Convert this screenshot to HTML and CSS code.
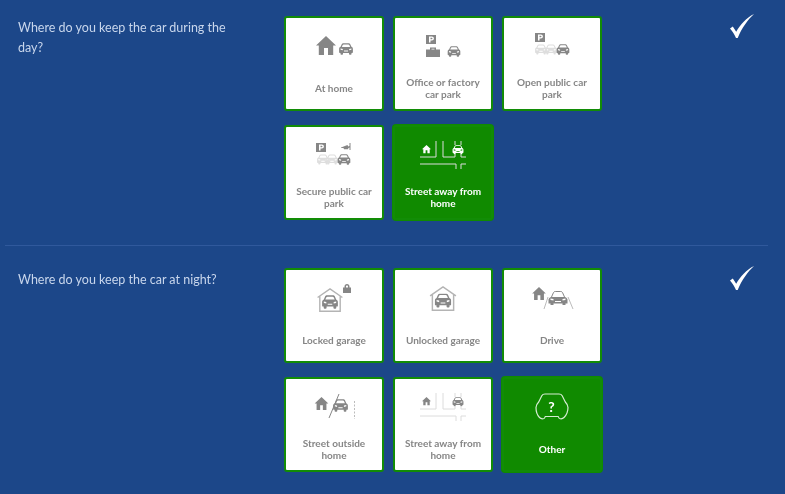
FILE: index.html
```html
<!DOCTYPE html>
<html lang="en">
<head>
<meta charset="utf-8">
<title>Where do you keep the car</title>
<link rel="stylesheet" href="styles.css">
</head>
<body>
<svg class="sprites" aria-hidden="true">
  <defs>
    <symbol id="car" viewBox="0 0 14 12">
      <path fill="currentColor" fill-rule="evenodd" d="M2.600 1.500C3 .6 3.700.2 4.700.2h4.600c1 0 1.700.4 2.100 1.300l1 2.300c.9.4 1.500 1.100 1.500 2.200v3.200c0 .5-.3.8-.8.8h-.6v1c0 .5-.3.8-.8.8h-.9c-.5 0-.8-.3-.8-.8v-1H4v1c0 .5-.3.8-.8.8h-.9c-.5 0-.8-.3-.8-.8v-1H.9C.4 10 .1 9.700.1 9.200V6c0-1.100.6-1.800 1.500-2.200zM3.700 2l-.8 1.900h8.200L10.300 2c-.2-.4-.5-.6-1-.6H4.700c-.5 0-.8.2-1 .6zM1.600 5.500v1.300l2.200.5V6zM12.400 5.500v1.300l-2.200.5V6zM5 7.600v.9h4v-.9z"/>
    </symbol>
    <symbol id="house" viewBox="0 0 20 19">
      <path fill="currentColor" fill-rule="evenodd" d="M10 0l10 9.500h-2.800V19H2.800V9.500H0zM8 12v7h4v-7z"/>
    </symbol>
    <symbol id="parking" viewBox="0 0 10 9">
      <path fill="currentColor" fill-rule="evenodd" d="M0 0h10v9H0zM3 1.500v6h1.500V5.500h1.300c1.300 0 2.100-.8 2.100-2s-.8-2-2.100-2zM4.500 2.700h1.100c.6 0 .9.300.9.800s-.3.800-.9.800H4.500z"/>
    </symbol>
    <symbol id="garage" viewBox="0 0 26 24">
      <path class="garage-wall" fill="none" stroke-width="1.400" d="M.6 9.500L13 .9l12.400 8.600M2.800 8.300v15h20.400V8.300"/>
      <use href="#car" x="5" y="7" width="16" height="14"/>
    </symbol>
    <symbol id="street" viewBox="0 0 96 58">
      <path class="lines" fill="none" stroke-width="1" d="M41 14v16H25M48 14v16h12v-3M60 14v4M66 14v4M66 27v3h5M25 37h36v5M71 37h-5v5"/>
      <use href="#house" x="27" y="18" width="9" height="8.500"/>
      <use href="#car" x="57" y="18" width="12" height="9.500"/>
    </symbol>
  </defs>
</svg>

<main class="page">
  <section class="question">
    <p class="question-text">Where do you keep the car during the day?</p>
    <div class="options">
      <button class="card">
        <svg class="icon" viewBox="0 0 96 58"><use href="#house" x="30" y="18" width="20" height="19"/><use href="#car" x="53" y="25" width="14" height="12"/></svg>
        <span class="label">At home</span>
      </button>
      <button class="card">
        <svg class="icon" viewBox="0 0 96 58"><use href="#parking" x="31" y="17" width="10" height="9"/><path fill="currentColor" fill-rule="evenodd" d="M31 31.500h4v-2h6v2h4V39H31zM36.500 30.800v.7h3v-.7z"/><use href="#car" x="52" y="28" width="14" height="11"/></svg>
        <span class="label">Office or factory car park</span>
      </button>
      <button class="card">
        <svg class="icon" viewBox="0 0 96 58"><use href="#parking" x="31" y="15" width="10" height="9"/><g class="pale"><use href="#car" x="31" y="26" width="12" height="11"/><use href="#car" x="41" y="26" width="12" height="11"/></g><use href="#car" x="52" y="26" width="14" height="11"/></svg>
        <span class="label">Open public car park</span>
      </button>
      <button class="card">
        <svg class="icon" viewBox="0 0 96 58"><use href="#parking" x="30" y="16" width="10" height="9"/><path fill="currentColor" d="M55 20.500l6.500-2.500.7 1.500 1.300-.5V16h1v7h-1v-2.500l-1 .5-.6 1.300H58l-.5-1.300H55z"/><g class="pale"><use href="#car" x="31" y="27" width="12" height="11"/><use href="#car" x="40" y="27" width="12" height="11"/></g><use href="#car" x="51" y="27" width="14" height="11"/></svg>
        <span class="label">Secure public car park</span>
      </button>
      <button class="card selected">
        <svg class="icon" viewBox="0 0 96 58"><use href="#street" width="96" height="58"/></svg>
        <span class="label">Street away from home</span>
      </button>
    </div>
    <svg class="tick" viewBox="0 0 24 24"><path fill="#fff" d="M0 14.500l2.800-2 3.400 5.300C10.500 10.500 16 4 24 0c-6 5.500-12 13.500-16.300 24H6C4.500 20.500 2.500 17.500 0 14.500z"/></svg>
  </section>

  <section class="question">
    <p class="question-text">Where do you keep the car at night?</p>
    <div class="options">
      <button class="card">
        <svg class="icon" viewBox="0 0 96 58"><use href="#garage" x="31" y="18" width="26" height="24"/><path fill="currentColor" fill-rule="evenodd" d="M58.500 17.500v-.8c0-1.800 1-2.700 2.500-2.700s2.500.9 2.500 2.700v.8h1.500V23h-8v-5.500zM60 17.500h2v-.8c0-.8-.3-1.300-1-1.300s-1 .5-1 1.300z"/></svg>
        <span class="label">Locked garage</span>
      </button>
      <button class="card">
        <svg class="icon" viewBox="0 0 96 58"><use href="#garage" x="34" y="16" width="28" height="25"/></svg>
        <span class="label">Unlocked garage</span>
      </button>
      <button class="card">
        <svg class="icon" viewBox="0 0 96 58"><use href="#house" x="27" y="17" width="16" height="13"/><path class="dash" fill="none" stroke-width="1" d="M44 27l-4 12M64 27l5 12"/><path fill="none" stroke="currentColor" stroke-width="1" d="M47.500 27l2-4.500c.4-.7 1-1 1.800-1h5.400c.8 0 1.400.3 1.800 1l2 4.500"/><path fill="currentColor" fill-rule="evenodd" d="M47 27h14c1.500.5 2.500 1.500 2.500 3v3.500h-2V35h-3v-1.500h-9V35h-3v-1.500h-2V30c0-1.500 1-2.500 2.500-3zM46.500 28.500v1.500l3 .5v-1.500zM61.500 28.500v1.500l-3 .5v-1.500zM51 31v1h6v-1z"/></svg>
        <span class="label">Drive</span>
      </button>
      <button class="card">
        <svg class="icon" viewBox="0 0 96 58"><use href="#house" x="28" y="18" width="15" height="13"/><use href="#car" x="47" y="20" width="15" height="13"/><path fill="none" stroke="currentColor" stroke-width="1" d="M53 15L43 39"/><path class="dash" fill="none" stroke-width="1" stroke-dasharray="2 1.500" d="M68.500 22v18"/></svg>
        <span class="label">Street outside home</span>
      </button>
      <button class="card">
        <svg class="icon" viewBox="0 0 96 58"><use href="#street" width="96" height="58"/></svg>
        <span class="label">Street away from home</span>
      </button>
      <button class="card selected">
        <svg class="icon" viewBox="0 0 96 58"><path class="other-car" fill="none" stroke-width="1.200" stroke-linejoin="round" d="M41 15h14c1.700 0 2.500.5 3.200 1.800l3.100 6.200c1.500 1.500 2.700 3.500 2.700 5.500 0 4-2 8-4 10-1 1-3 1.500-4.500 1-.7-.3-1-1-1.200-2H41.200c-.2 1-.5 1.700-1.200 2-1.500.5-3.500 0-4.500-1-2-2-3.500-6-3.500-10 0-2 1.200-4 2.700-5.500l3.100-6.200C38.500 15.500 39.300 15 41 15z"/><text class="mark" x="47.500" y="33">?</text></svg>
        <span class="label">Other</span>
      </button>
    </div>
    <svg class="tick" viewBox="0 0 24 24"><path fill="#fff" d="M0 14.500l2.800-2 3.400 5.300C10.500 10.500 16 4 24 0c-6 5.500-12 13.500-16.300 24H6C4.500 20.500 2.500 17.500 0 14.500z"/></svg>
  </section>
</main>
</body>
</html>
```

FILE: styles.css
```css
* { box-sizing: border-box; }

html, body {
  margin: 0;
  height: 494px;
  overflow: hidden;
  background: #1c4789;
}

.sprites {
  position: absolute;
  width: 0;
  height: 0;
}

.page {
  width: 763px;
  margin-left: 5px;
  font-family: "Lato", "Noto Sans", sans-serif;
  filter: blur(.4px);
}

.question {
  display: grid;
  grid-template-columns: 266px 318px 1fr;
  padding: 16px 0 25px 13px;
  border-bottom: 1px solid #30599c;
}

.question + .question {
  padding-top: 22px;
  border-bottom: 0;
}

.question-text {
  margin: 2px 0 0;
  width: 225px;
  color: #c8d6ec;
  font-size: 12.5px;
  line-height: 20px;
}

.options {
  display: grid;
  grid-template-columns: repeat(3, 100px);
  grid-auto-rows: 95px;
  column-gap: 9px;
  row-gap: 14px;
}

.card {
  display: flex;
  flex-direction: column;
  width: 100px;
  height: 95px;
  margin: 0;
  padding: 0;
  border: 2px solid #128c06;
  border-radius: 3px;
  background: #fff;
  color: #868686;
  font-family: inherit;
}

.card.selected {
  background: #108a00;
  color: #fff;
  box-shadow: 0 0 0 1px #108a00;
}

.icon {
  display: block;
  width: 96px;
  height: 58px;
  flex: none;
}

.label {
  display: flex;
  align-items: center;
  justify-content: center;
  width: 96px;
  height: 24px;
  padding: 0 4px;
  font-size: 10px;
  font-weight: 700;
  line-height: 12px;
  text-align: center;
}

.lines {
  stroke: #dcdcdc;
}

.selected .lines {
  stroke: #8fcb8a;
}

.pale {
  color: #dedede;
}

.dash {
  stroke: #bcbcbc;
}

.garage-wall {
  stroke: #b4b4b4;
}

.other-car {
  stroke: #d5ecd2;
}

.mark {
  fill: currentColor;
  font-family: "Lato", sans-serif;
  font-size: 14px;
  font-weight: 700;
  text-anchor: middle;
}

.tick {
  display: block;
  width: 24px;
  height: 24px;
  margin: -2px 0 0 128px;
  justify-self: start;
}
```
